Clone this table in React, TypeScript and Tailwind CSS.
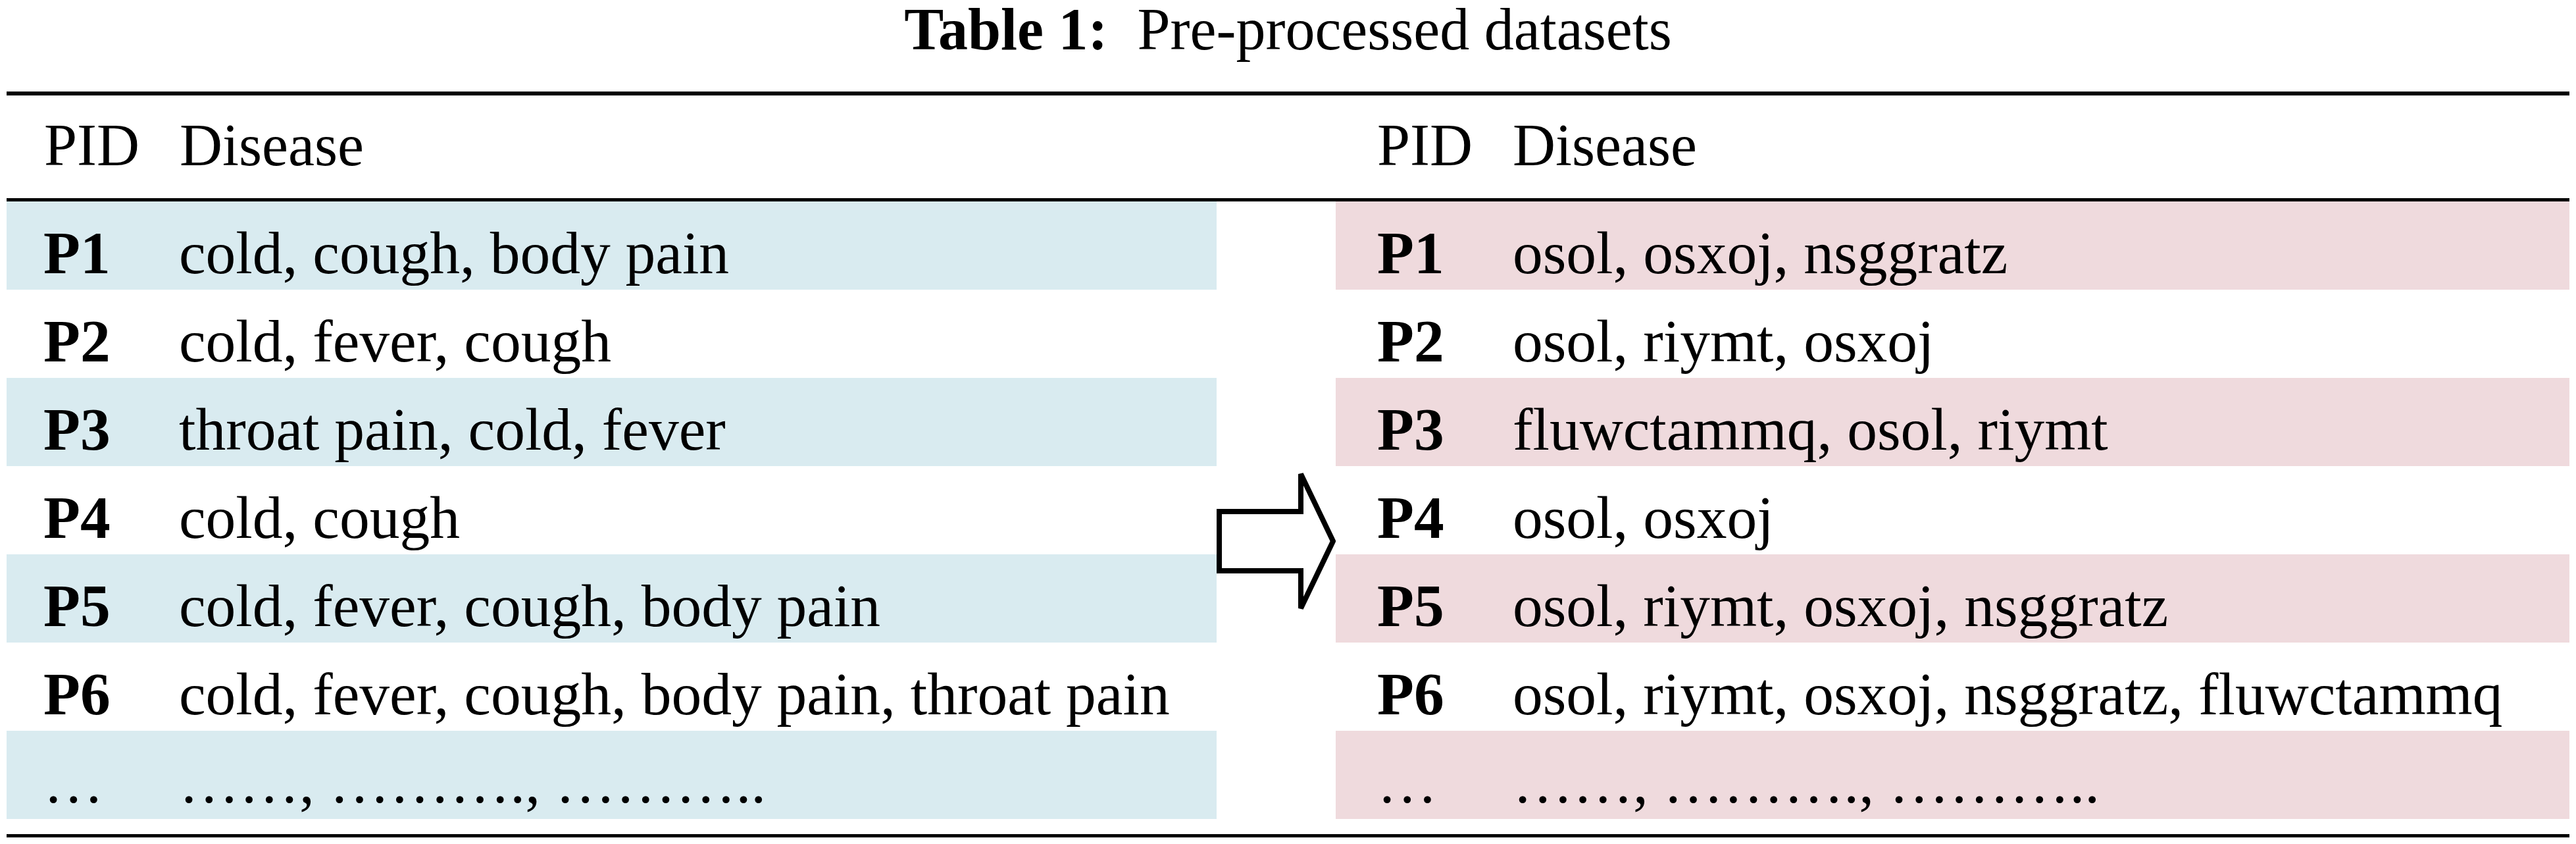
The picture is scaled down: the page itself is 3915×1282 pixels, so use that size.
const LEFT_ROWS = [
  { pid: 'P1', disease: 'cold, cough, body pain' },
  { pid: 'P2', disease: 'cold, fever, cough' },
  { pid: 'P3', disease: 'throat pain, cold, fever' },
  { pid: 'P4', disease: 'cold, cough' },
  { pid: 'P5', disease: 'cold, fever, cough, body pain' },
  { pid: 'P6', disease: 'cold, fever, cough, body pain, throat pain' },
  { pid: '…', disease: '……, ………., ………..' },
];

const RIGHT_ROWS = [
  { pid: 'P1', disease: 'osol, osxoj, nsggratz' },
  { pid: 'P2', disease: 'osol, riymt, osxoj' },
  { pid: 'P3', disease: 'fluwctammq, osol, riymt' },
  { pid: 'P4', disease: 'osol, osxoj' },
  { pid: 'P5', disease: 'osol, riymt, osxoj, nsggratz' },
  { pid: 'P6', disease: 'osol, riymt, osxoj, nsggratz, fluwctammq' },
  { pid: '…', disease: '……, ………., ………..' },
];

type Row = { pid: string; disease: string };

const DataTable = ({ rows, stripe, side }: { rows: Row[]; stripe: string; side: 'left' | 'right' }) => (
  <div className={side === 'left' ? 'flex w-[1839px] flex-col' : 'flex flex-1 flex-col'}>
    {rows.map((row, index) => (
      <div
        key={index}
        className={`flex h-[134px] pt-[33px] text-[91.5px] leading-[91px] ${
          side === 'left' ? 'pl-[56px]' : 'pl-[63px]'
        } ${index % 2 === 0 ? stripe : 'bg-white'}`}
      >
        <div className={`w-[206px] shrink-0 ${row.pid === '…' ? '' : 'font-bold'}`}>{row.pid}</div>
        <div className="whitespace-nowrap">{row.disease}</div>
      </div>
    ))}
  </div>
);

const HeaderCells = ({ side }: { side: 'left' | 'right' }) => (
  <div
    className={`flex pt-[31px] text-[90px] leading-[90px] ${
      side === 'left' ? 'w-[2020px] pl-[57px]' : 'flex-1 pl-[63px]'
    }`}
  >
    <div className="w-[206px] shrink-0">PID</div>
    <div>Disease</div>
  </div>
);

const App = () => {
  return (
    <div
      className="min-h-[1282px] w-[3915px] bg-white px-[10px] text-black"
      style={{ fontFamily: '"Liberation Serif", "Times New Roman", serif' }}
    >
      {/* Caption */}
      <div className="h-[139px] text-center text-[90px] leading-[90px] whitespace-nowrap">
        <span className="font-bold">Table 1:</span>
        <span className="ml-[45px]">Pre-processed datasets</span>
      </div>
      <div className="h-[6px] bg-black" />

      {/* Column headers */}
      <div className="flex h-[156px]">
        <HeaderCells side="left" />
        <HeaderCells side="right" />
      </div>
      <div className="h-[5px] bg-black" />

      {/* Body */}
      <div className="flex">
        <DataTable rows={LEFT_ROWS} stripe="bg-[#d9ebf0]" side="left" />
        <div className="w-[181px] shrink-0 pt-[410px]">
          <svg width="181" height="212" viewBox="0 0 181 212" fill="none" overflow="visible">
            <polygon
              points="4,61 128,61 128,4 177,106 128,208 128,151 4,151"
              fill="#ffffff"
              stroke="#000000"
              strokeWidth="8"
            />
          </svg>
        </div>
        <DataTable rows={RIGHT_ROWS} stripe="bg-[#efdadd]" side="right" />
      </div>

      <div className="h-[23px]" />
      <div className="h-[5px] bg-black" />
    </div>
  );
};

export default App;
